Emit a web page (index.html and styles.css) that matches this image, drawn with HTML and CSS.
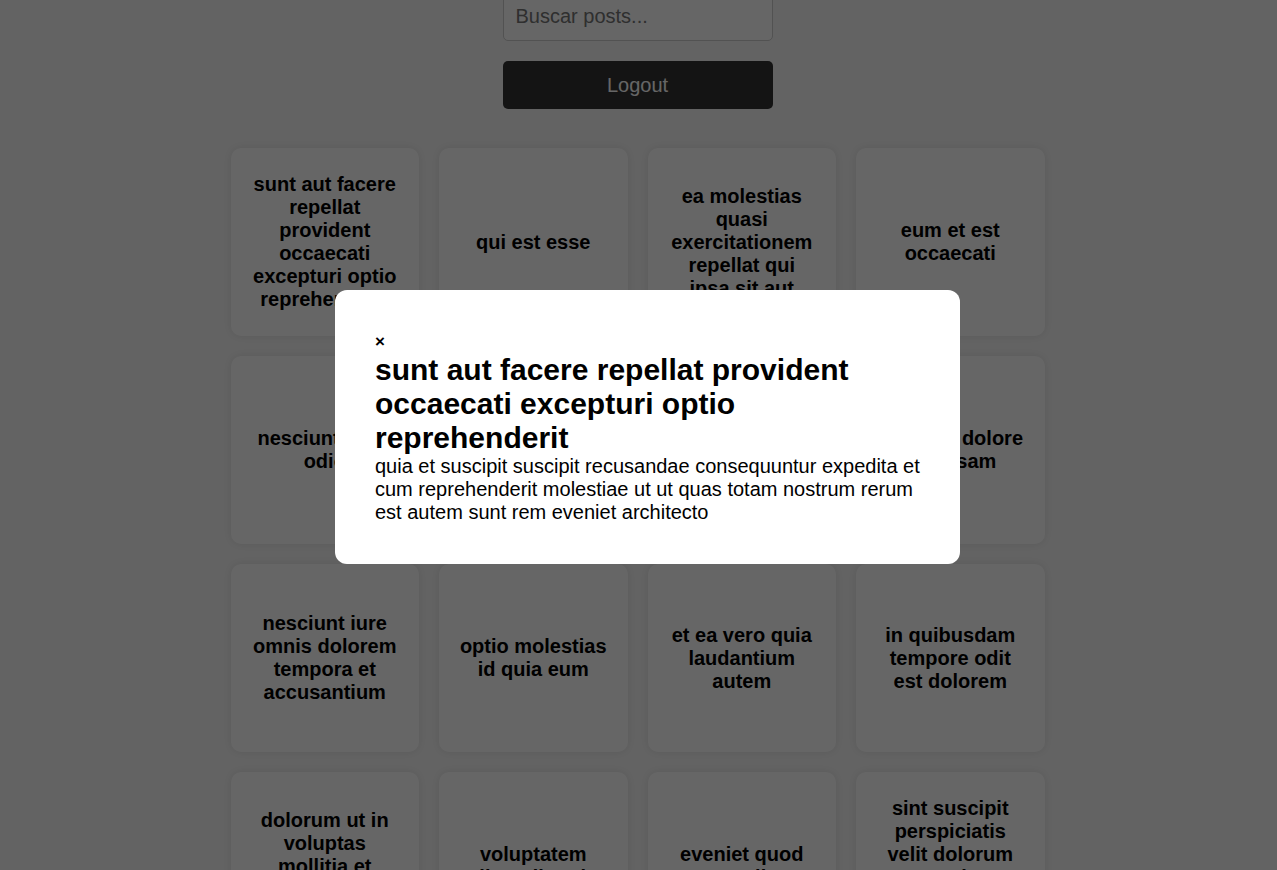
FILE: index.html
```html
<!DOCTYPE html>
<html lang="es">
<head>
  <meta charset="utf-8">
  <meta name="viewport" content="width=device-width, initial-scale=1">
  <title>Posts</title>
  <link rel="stylesheet" href="styles.css">
</head>
<body>
  <main class="page">
    <div class="toolbar">
      <input class="search" type="text" placeholder="Buscar posts..." aria-label="Buscar posts">
      <button class="logout" type="button">Logout</button>
    </div>
    <section class="posts">
      <article class="card"><h2 class="card-title">sunt aut facere repellat provident occaecati excepturi optio reprehenderit</h2></article>
      <article class="card"><h2 class="card-title">qui est esse</h2></article>
      <article class="card"><h2 class="card-title">ea molestias quasi exercitationem repellat qui ipsa sit aut</h2></article>
      <article class="card"><h2 class="card-title">eum et est occaecati</h2></article>
      <article class="card"><h2 class="card-title">nesciunt quas odio</h2></article>
      <article class="card"><h2 class="card-title">dolorem eum magni eos aperiam quia</h2></article>
      <article class="card"><h2 class="card-title">magnam facilis autem</h2></article>
      <article class="card"><h2 class="card-title">dolorem dolore est ipsam</h2></article>
      <article class="card"><h2 class="card-title">nesciunt iure omnis dolorem tempora et accusantium</h2></article>
      <article class="card"><h2 class="card-title">optio molestias id quia eum</h2></article>
      <article class="card"><h2 class="card-title">et ea vero quia laudantium autem</h2></article>
      <article class="card"><h2 class="card-title">in quibusdam tempore odit est dolorem</h2></article>
      <article class="card"><h2 class="card-title">dolorum ut in voluptas mollitia et saepe quo animi</h2></article>
      <article class="card"><h2 class="card-title">voluptatem eligendi optio</h2></article>
      <article class="card"><h2 class="card-title">eveniet quod temporibus</h2></article>
      <article class="card"><h2 class="card-title">sint suscipit perspiciatis velit dolorum rerum ipsa laboriosam odio</h2></article>
    </section>
  </main>

  <div class="overlay">
    <div class="modal" role="dialog" aria-modal="true" aria-labelledby="modal-title">
      <button class="close" type="button" aria-label="Cerrar">×</button>
      <h1 class="modal-title" id="modal-title">sunt aut facere repellat provident occaecati excepturi optio reprehenderit</h1>
      <p class="modal-body">quia et suscipit suscipit recusandae consequuntur expedita et cum reprehenderit molestiae ut ut quas totam nostrum rerum est autem sunt rem eveniet architecto</p>
    </div>
  </div>
</body>
</html>
```
FILE: styles.css
```css
* {
  box-sizing: border-box;
  margin: 0;
  padding: 0;
}

body {
  height: 100vh;
  overflow: hidden;
  background: #f8f8f8;
  color: #000;
  font: 20px/23px "Liberation Sans", Arial, sans-serif;
}

.page {
  display: flex;
  flex-direction: column;
  align-items: center;
  gap: 39px;
  margin-top: -7px;
  padding-right: 2px;
}

.toolbar {
  display: flex;
  flex-direction: column;
  gap: 20px;
  width: 270px;
}

.search,
.logout {
  width: 100%;
  padding: 12px;
  border-radius: 5px;
  font: inherit;
}

.search {
  padding: 10px 12px 12px;
  border: 1px solid #ccc;
  background: #fff;
}

.search::placeholder {
  color: #757575;
}

.logout {
  height: 48px;
  border: 0;
  background: #333;
  color: #fff;
}

.posts {
  display: grid;
  grid-template-columns: repeat(4, 1fr);
  gap: 20px;
  width: 100%;
  max-width: 814px;
}

.card {
  display: flex;
  align-items: center;
  justify-content: center;
  min-height: 188px;
  padding: 20px;
  border-radius: 10px;
  background: #fff;
  box-shadow: 0 0 10px rgba(0, 0, 0, 0.1);
  text-align: center;
}

.card-title {
  font-size: 20px;
  line-height: 23px;
}

.search {
  height: 48px;
}

.overlay {
  position: fixed;
  inset: 0;
  display: flex;
  align-items: center;
  justify-content: center;
  padding: 0 0 16px 18px;
  background: rgba(0, 0, 0, 0.6);
}

.modal {
  width: 100%;
  max-width: 625px;
  padding: 40px;
  border-radius: 12px;
  background: #fff;
}

.close {
  display: block;
  border: 0;
  background: none;
  color: #000;
  font: bold 17px/23px "Liberation Sans", Arial, sans-serif;
}

.modal-title {
  font-size: 30px;
  line-height: 34px;
}
```
